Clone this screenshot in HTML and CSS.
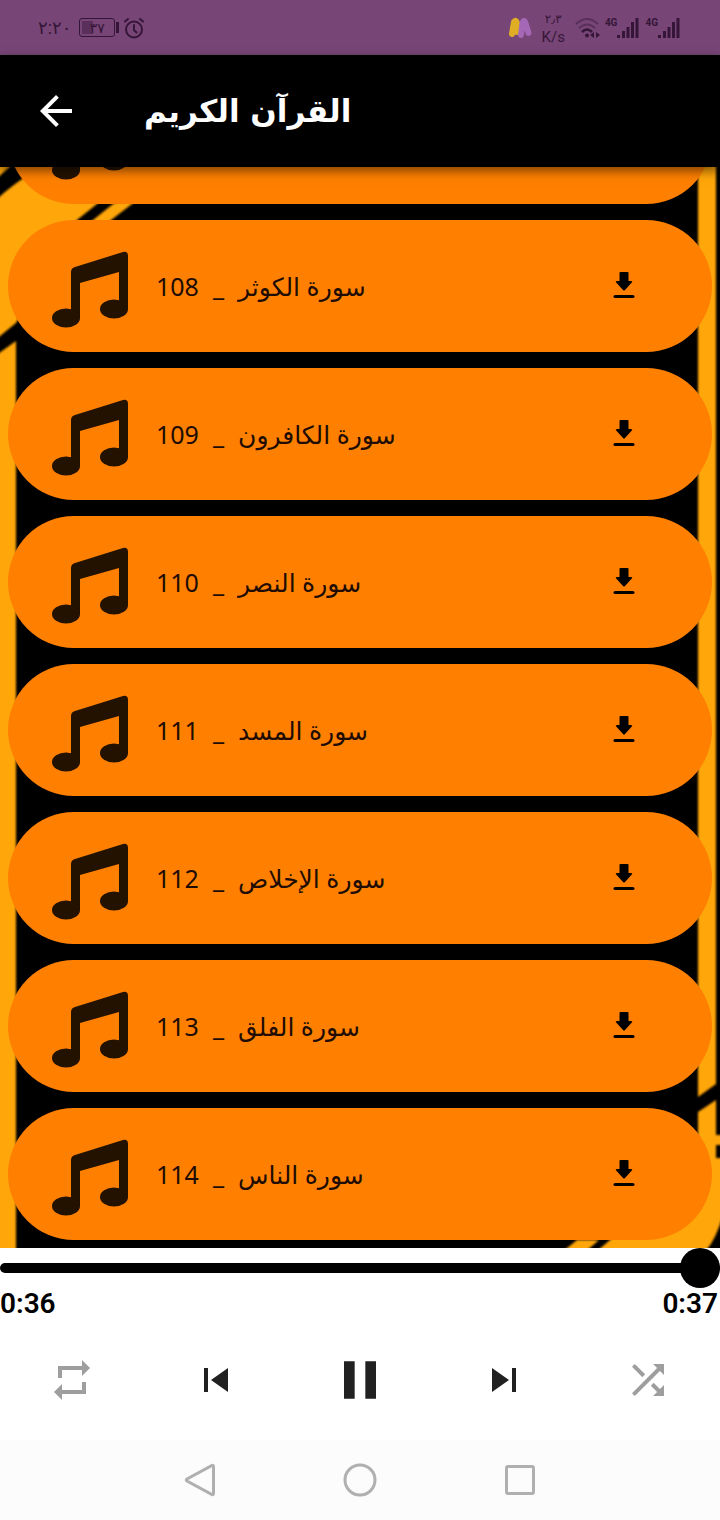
FILE: index.html
```html
<!DOCTYPE html>
<html lang="ar">
<head>
    <meta charset="UTF-8">
    <meta name="viewport" content="width=device-width, initial-scale=1.0">
    <title>القرآن الكريم</title>
    <link rel="stylesheet" href="styles.css">
    <script src="script.js" defer></script>
</head>
<body>
    <svg class="symbols" width="0" height="0" aria-hidden="true">
        <symbol id="note" viewBox="0 -8 76 84">
            <path d="M19 20q0-4 4-5L71 0q5-1 5 4v53H67V20L28 31v35H19z"/>
            <ellipse cx="14" cy="66" rx="14" ry="9.5"/>
            <ellipse cx="62" cy="57" rx="14" ry="9.5"/>
        </symbol>
        <symbol id="download" viewBox="0 0 24 28">
            <path d="M8.500 0h7q1 0 1 1v8H19q2 0 .8 1.600L13 18q-1 1-2 0L4.200 10.600Q3 9 5 9h2.500V1q0-1 1-1z"/>
            <rect x="1.500" y="23" width="21" height="3" rx="1.500"/>
        </symbol>
        <symbol id="signal" viewBox="0 0 22 22">
            <path d="M0 18h3v3H0zM5 14h3v7H5zM9.500 10h3v11h-3zM14 5h3v16h-3zM18.500 1h3v20h-3z"/>
        </symbol>
    </svg>

    <div class="status">
        <div class="status-group">
            <span class="clock">٢:٢٠</span>
            <span class="battery"><span class="battery-text">٣٧</span></span>
            <svg class="alarm" viewBox="0 0 22 22" fill="none" stroke="currentColor" stroke-width="2" stroke-linecap="round">
                <circle cx="11" cy="12.500" r="8"/>
                <path d="M11 8v5l2.500 2.500M2 4.500L5 2M20 4.500L17 2"/>
            </svg>
        </div>
        <div class="status-group status-right">
            <svg class="app-mark" viewBox="0 0 24 22" fill="none" stroke-width="6" stroke-linecap="round">
                <path d="M4 17L6 5q2-3 3 1v9" stroke="#e0ae25"/>
                <path d="M13 18l1.500-12q1.500-4 3 0l3 10" stroke="#a468b6"/>
            </svg>
            <span class="rate"><span class="rate-number">٢٫٣</span><span>K/s</span></span>
            <svg class="wifi" viewBox="0 0 26 22" fill="none" stroke="currentColor" stroke-width="2">
                <path d="M1 7q11-10 22 0M4 11q8-7 16 0" opacity=".45"/>
                <path d="M7 15q5-5 10 0" stroke-width="2.500"/>
                <circle cx="12" cy="18.500" r="2" fill="currentColor" stroke="none"/>
                <path d="M19 15v6l-4-3zM21 15v6l4-3z" fill="currentColor" stroke="none"/>
            </svg>
            <span class="sim"><span class="sim-type">4G</span><svg class="bars"><use href="#signal"/></svg></span>
            <span class="sim"><span class="sim-type">4G</span><svg class="bars"><use href="#signal"/></svg></span>
        </div>
    </div>

    <header class="header">
        <button class="back-btn" aria-label="رجوع">
            <svg viewBox="0 0 24 24"><path d="M20 11H7.830l5.590-5.590L12 4l-8 8 8 8 1.410-1.410L7.830 13H20z"/></svg>
        </button>
        <h1 class="title" dir="rtl">القرآن الكريم</h1>
    </header>

    <main class="content">
        <svg class="backdrop" viewBox="0 0 720 1081" preserveAspectRatio="none" aria-hidden="true">
            <g class="stripes">
                <path d="M-5-5H15L-5 13z"/>
                <path d="M-5 34Q10 19 40 0H130L97 37 77 53 16 156-5 173z"/>
                <path d="M113 37L93 53 85 60H102L132 37 150 20z"/>
                <path d="M-5 189L16 174V1090H-5z"/>
                <path d="M698-5H716V917L698 930z"/>
                <path d="M698 945L716 933V968H725V978H716V991H725V1040Q717 1075 700 1090H590L610 1073 650 1040 698 990z"/>
                <path d="M577 1073H599L584 1086H561z"/>
            </g>
        </svg>
        <ul class="list" id="lista"></ul>
    </main>

    <section class="player">
        <input class="seek" type="range" min="0" max="37" value="37" aria-label="موضع التشغيل">
        <div class="times">
            <span>0:36</span>
            <span>0:37</span>
        </div>
        <div class="controls">
            <button class="control-btn muted" aria-label="تكرار">
                <svg viewBox="0 0 24 24"><path d="M7 7h10v3l4-4-4-4v3H5v6h2zM17 17H7v-3l-4 4 4 4v-3h12v-6h-2z"/></svg>
            </button>
            <button class="control-btn" aria-label="السابق">
                <svg viewBox="0 0 24 24"><path d="M6 6h2v12H6zM9.500 12l8.500 6V6z"/></svg>
            </button>
            <button class="control-btn pause-btn" aria-label="إيقاف مؤقت">
                <svg viewBox="0 0 24 24"><path d="M6 19h4V5H6zM14 5v14h4V5z"/></svg>
            </button>
            <button class="control-btn" aria-label="التالي">
                <svg viewBox="0 0 24 24"><path d="M6 18l8.500-6L6 6zM16 6v12h2V6z"/></svg>
            </button>
            <button class="control-btn muted" aria-label="عشوائي">
                <svg viewBox="0 0 24 24"><path d="M10.590 9.170L5.410 4 4 5.410l5.170 5.170zM14.500 4l2.040 2.040L4 18.590 5.410 20 17.960 7.460 20 9.500V4zM14.830 13.410l-1.410 1.410 3.130 3.130L14.500 20H20v-5.500l-2.040 2.040z"/></svg>
            </button>
        </div>
    </section>

    <nav class="nav">
        <button class="nav-btn" aria-label="السابق">
            <svg viewBox="0 0 36 36"><path d="M30 3.500Q31.500 3 31.500 4.500V31.500Q31.500 33 30 32.500L5 19Q3.500 18 5 17z"/></svg>
        </button>
        <button class="nav-btn" aria-label="الرئيسية">
            <svg viewBox="0 0 36 36"><circle cx="18" cy="18" r="15"/></svg>
        </button>
        <button class="nav-btn" aria-label="التطبيقات">
            <svg viewBox="0 0 36 36"><rect x="4.500" y="4.500" width="27" height="27" rx="1.500"/></svg>
        </button>
    </nav>
</body>
</html>
```

FILE: styles.css
```css
* {
    box-sizing: border-box;
}

body {
    margin: 0;
    height: 100vh;
    display: flex;
    flex-direction: column;
    background-color: #fff;
    font-family: Roboto, "DejaVu Sans", sans-serif;
}

button {
    display: flex;
    align-items: center;
    justify-content: center;
    padding: 0;
    border: none;
    background: none;
    color: inherit;
    cursor: pointer;
}

svg {
    display: block;
    fill: currentColor;
}

.symbols {
    position: absolute;
}

/* status bar */
.status {
    flex: none;
    height: 55px;
    display: flex;
    justify-content: space-between;
    align-items: center;
    padding: 0 40px 0 38px;
    background-color: #774576;
    color: #361638;
}

.status-group {
    display: flex;
    align-items: center;
    gap: 8px;
}

.status-right {
    gap: 10px;
}

.clock {
    font-size: 18px;
    line-height: 24px;
}

.battery {
    width: 36px;
    height: 19px;
    display: flex;
    align-items: center;
    justify-content: center;
    border: 1px solid #361638;
    border-radius: 3px;
    background: linear-gradient(#5a305b, #5a305b) 2px 2px / 11px 13px no-repeat;
    position: relative;
}

.battery::after {
    content: "";
    position: absolute;
    right: -5px;
    top: 3px;
    width: 3px;
    height: 11px;
    background-color: #361638;
}

.battery-text {
    font-size: 14px;
    line-height: 16px;
}

.alarm {
    width: 22px;
    height: 22px;
    fill: none;
}

.app-mark {
    width: 24px;
    height: 22px;
    fill: none;
}

.rate {
    display: flex;
    flex-direction: column;
    align-items: center;
    font-size: 15px;
    line-height: 18px;
}

.rate-number {
    font-size: 12px;
}

.wifi {
    width: 26px;
    height: 22px;
    margin-right: -6px;
    fill: none;
}

.sim {
    display: flex;
    align-items: flex-start;
}

.sim + .sim {
    margin-left: -4px;
}

.sim-type {
    font-size: 10px;
    line-height: 12px;
    font-weight: bold;
}

.bars {
    width: 22px;
    height: 22px;
}

/* header */
.header {
    flex: none;
    height: 112px;
    display: flex;
    align-items: center;
    gap: 64px;
    padding: 0 32px;
    background-color: #000;
    color: #fff;
    box-shadow: 0 4px 10px rgba(0, 0, 0, 0.5);
    position: relative;
    z-index: 1;
}

.back-btn svg {
    width: 48px;
    height: 48px;
}

.title {
    margin: 0;
    font-family: "DejaVu Sans", sans-serif;
    font-size: 31px;
    line-height: 48px;
    font-weight: bold;
}

/* list */
.content {
    flex: 1;
    min-height: 0;
    display: flex;
    flex-direction: column;
    justify-content: flex-end;
    overflow: hidden;
    background-color: #000;
    position: relative;
}

.backdrop {
    position: absolute;
    top: 0;
    left: 0;
    width: 100%;
    height: 100%;
}

.stripes {
    fill: #ffa60a;
    filter: blur(1px);
}

.list {
    display: flex;
    flex-direction: column;
    gap: 16px;
    margin: 0;
    padding: 8px;
    list-style: none;
    position: relative;
}

.card {
    height: 132px;
    display: flex;
    align-items: center;
    gap: 28px;
    padding: 0 64px 0 44px;
    border-radius: 66px;
    background-color: #ff8000;
}

.note {
    width: 76px;
    height: 84px;
    color: #241200;
}

.name {
    flex: 1;
    display: flex;
    align-items: center;
    gap: 14px;
    font-family: "Noto Sans", "DejaVu Sans", sans-serif;
    font-size: 25px;
    line-height: 36px;
    color: #200c04;
}

.download-btn {
    width: 48px;
    height: 48px;
}

.download-btn svg {
    width: 24px;
    height: 28px;
}

/* player */
.player {
    flex: none;
    background-color: #fff;
}

.seek {
    display: block;
    width: 100%;
    height: 40px;
    margin: 0;
    background: none;
    appearance: none;
    -webkit-appearance: none;
}

.seek::-webkit-slider-runnable-track {
    height: 10px;
    border-radius: 5px;
    background-color: #000;
}

.seek::-webkit-slider-thumb {
    -webkit-appearance: none;
    width: 40px;
    height: 40px;
    margin-top: -15px;
    border-radius: 50%;
    background-color: #000;
}

.times {
    display: flex;
    justify-content: space-between;
    padding: 0 2px 0 0;
    font-size: 28px;
    line-height: 32px;
    font-weight: 600;
    color: #000;
}

.controls {
    height: 120px;
    display: grid;
    grid-template-columns: repeat(5, 1fr);
    color: #212121;
}

.control-btn svg {
    width: 48px;
    height: 48px;
}

.pause-btn svg {
    width: 64px;
    height: 64px;
}

.muted {
    color: #9e9e9e;
}

/* system navigation */
.nav {
    flex: none;
    height: 80px;
    display: grid;
    grid-template-columns: repeat(3, 160px);
    justify-content: center;
    background-color: #fcfcfc;
}

.nav-btn svg {
    width: 36px;
    height: 36px;
    fill: none;
    stroke: #b0b0b0;
    stroke-width: 3px;
}
```

FILE: script.js
```js
const suras = [
    { numero: 108, nome: "سورة الكوثر" },
    { numero: 109, nome: "سورة الكافرون" },
    { numero: 110, nome: "سورة النصر" },
    { numero: 111, nome: "سورة المسد" },
    { numero: 112, nome: "سورة الإخلاص" },
    { numero: 113, nome: "سورة الفلق" },
    { numero: 114, nome: "سورة الناس" }
]

const lista = document.getElementById("lista")
const nota = `<svg class="note"><use href="#note"/></svg>`

// card above the first row, mostly scrolled under the header
lista.innerHTML = `<li class="card">${nota}</li>`

suras.forEach((sura) => {
    const item = document.createElement("li")
    item.className = "card"
    item.innerHTML = `
        ${nota}
        <span class="name">
            <span>${sura.numero}</span>
            <span>_</span>
            <span class="sura" dir="rtl">${sura.nome}</span>
        </span>
        <button class="download-btn" aria-label="تحميل ${sura.nome}">
            <svg><use href="#download"/></svg>
        </button>
    `
    lista.appendChild(item)
})
```
